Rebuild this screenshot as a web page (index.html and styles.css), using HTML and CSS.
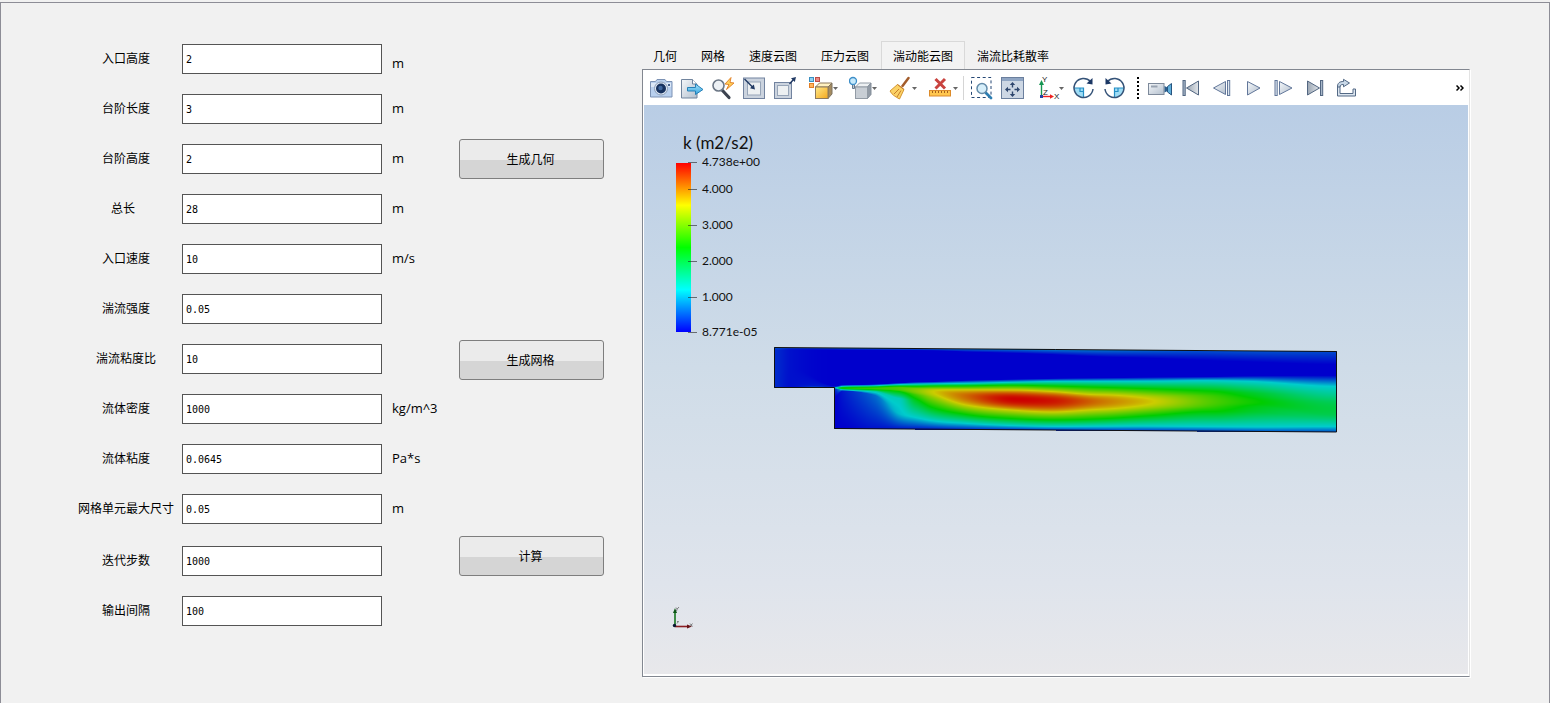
FILE: index.html
```html
<!DOCTYPE html>
<html lang="zh-CN">
<head>
<meta charset="utf-8">
<title>后台阶流动仿真</title>
<link rel="stylesheet" href="styles.css">
</head>
<body>
<main class="frame">
  <form class="params">
    <div class="row"><label for="p1">入口高度</label><input id="p1" type="text" value="2"><span class="unit unit-low">m</span></div>
    <div class="row"><label for="p2">台阶长度</label><input id="p2" type="text" value="3"><span class="unit">m</span></div>
    <div class="row"><label for="p3">台阶高度</label><input id="p3" type="text" value="2"><span class="unit">m</span></div>
    <div class="row"><label for="p4" class="short">总长</label><input id="p4" type="text" value="28"><span class="unit">m</span></div>
    <div class="row"><label for="p5">入口速度</label><input id="p5" type="text" value="10"><span class="unit">m/s</span></div>
    <div class="row"><label for="p6">湍流强度</label><input id="p6" type="text" value="0.05"></div>
    <div class="row"><label for="p7">湍流粘度比</label><input id="p7" type="text" value="10"></div>
    <div class="row"><label for="p8">流体密度</label><input id="p8" type="text" value="1000"><span class="unit">kg/m^3</span></div>
    <div class="row"><label for="p9">流体粘度</label><input id="p9" type="text" value="0.0645"><span class="unit">Pa*s</span></div>
    <div class="row"><label for="p10">网格单元最大尺寸</label><input id="p10" type="text" value="0.05"><span class="unit">m</span></div>
    <div class="row row-group"><label for="p11">迭代步数</label><input id="p11" type="text" value="1000"></div>
    <div class="row"><label for="p12">输出间隔</label><input id="p12" type="text" value="100"></div>
  </form>

  <div class="actions">
    <button type="button">生成几何</button>
    <button type="button">生成网格</button>
    <button type="button">计算</button>
  </div>

  <section class="viewer">
    <div class="tabs" role="tablist">
      <button class="tab" role="tab" type="button">几何</button>
      <button class="tab" role="tab" type="button">网格</button>
      <button class="tab" role="tab" type="button">速度云图</button>
      <button class="tab" role="tab" type="button">压力云图</button>
      <button class="tab active" role="tab" type="button" aria-selected="true">湍动能云图</button>
      <button class="tab" role="tab" type="button">湍流比耗散率</button>
    </div>
    <div class="panel">
      <div class="toolbar">
        <svg class="defs" width="0" height="0" aria-hidden="true">
          <defs>
            <linearGradient id="steel" x1="0" y1="0" x2="1" y2="1"><stop offset="0" stop-color="#f4f7fa"/><stop offset="1" stop-color="#b3bfcd"/></linearGradient>
            <linearGradient id="sky" x1="0" y1="0" x2="0" y2="1"><stop offset="0" stop-color="#a5e2fa"/><stop offset="1" stop-color="#35a5e0"/></linearGradient>
            <linearGradient id="gold" x1="0" y1="0" x2="1" y2="1"><stop offset="0" stop-color="#ffe98a"/><stop offset="1" stop-color="#f5a81c"/></linearGradient>
            <linearGradient id="dim" x1="0" y1="0" x2="1" y2="0"><stop offset="0" stop-color="#9ba6b3"/><stop offset="1" stop-color="#e2e6ea"/></linearGradient>
          </defs>
        </svg>
        <button class="tool" type="button" aria-label="截图"><svg width="24" height="24" viewBox="0 0 24 24"><path d="M1.500 5.500h5l1.500-2h8l1.500 2h5.500V21H1.500z" fill="#b9d0ee" stroke="#7c92b4"/><path d="M2 7h20v4H2z" fill="#dce8f7"/><circle cx="12" cy="12.500" r="6.500" fill="#dfe9f5" stroke="#8c9db6"/><circle cx="12" cy="12.500" r="5" fill="#17325f"/><circle cx="11.500" cy="12" r="2.200" fill="#4169a0"/><rect x="19" y="8" width="2" height="2" fill="#46618b"/></svg></button>
        <button class="tool" type="button" aria-label="导出场景"><svg width="24" height="24" viewBox="0 0 24 24"><path d="M1.500 3.500h11l4.500 4.500v14H1.500z" fill="url(#steel)" stroke="#71849d"/><path d="M12.500 3.500V8H17" fill="#fff" stroke="#71849d"/><path d="M7.500 11.500h8V8l7.500 5.500-7.500 5v-3.500h-8z" fill="url(#sky)" stroke="#2580b7"/></svg></button>
        <button class="tool" type="button" aria-label="快速缩放"><svg width="24" height="24" viewBox="0 0 24 24"><path d="M11 14l7 7.500" stroke="#3c4350" stroke-width="3.200" stroke-linecap="round"/><circle cx="7.500" cy="9.500" r="5.500" fill="#edf1f5" stroke="#6c7786" stroke-width="1.600"/><path d="M20 1.500l-6 6.500 4 .5-2.500 5L23 7l-4-.5z" fill="#ffd15a" stroke="#e4862e"/></svg></button>
        <button class="tool" type="button" aria-label="缩放到数据"><svg width="24" height="24" viewBox="0 0 24 24"><rect x="1.500" y="2" width="21" height="20.500" fill="#cbd3de" stroke="#72839f"/><rect x="5.500" y="6" width="13" height="13" fill="#edf0f2" stroke="#97a5b8"/><path d="M2.500 3l9 9" stroke="#203963" stroke-width="1.400"/><path d="M13 13.500l-5-1.200 3.800-3.800z" fill="#203963"/></svg></button>
        <button class="tool" type="button" aria-label="还原缩放"><svg width="24" height="24" viewBox="0 0 24 24"><rect x="1.500" y="6.500" width="17" height="16" fill="#cbd3de" stroke="#72839f"/><rect x="4.500" y="9.500" width="11" height="10" fill="#edf0f2" stroke="#97a5b8"/><path d="M16.500 8l4-4.500" stroke="#203963" stroke-width="1.400"/><path d="M23 1l-1.200 5-3.800-3.800z" fill="#203963"/></svg></button>
        <button class="tool menu first-menu" type="button" aria-label="颜色"><svg width="30" height="24" viewBox="0 0 30 24"><g stroke-width="1"><rect x=".5" y="1.500" width="4" height="4" fill="#8fd1f2" stroke="#3b8fc0"/><rect x="6.500" y="1.500" width="4" height="4" fill="#ea8a83" stroke="#bc4d47"/><rect x=".5" y="7.500" width="4" height="4" fill="#ffb55e" stroke="#e27f24"/></g><path d="M6.500 11l4-4h12.500l-4 4z" fill="#fff1c0" stroke="#8e7a5c"/><path d="M19 11l4-4v11l-4 4.500z" fill="#a58c60" stroke="#7d7260"/><rect x="6.500" y="11" width="12.500" height="11.500" fill="url(#gold)" stroke="#8e7a5c"/><path d="M24 11h5l-2.500 3z" fill="#666"/></svg></button>
        <button class="tool menu" type="button" aria-label="光照"><svg width="30" height="24" viewBox="0 0 30 24"><circle cx="4" cy="5" r="3.500" fill="#c7eafc" stroke="#3d8ec8" stroke-width="1.300"/><path d="M3.500 9v3.500h2V9" fill="#bfc7cf" stroke="#63788d"/><path d="M6.500 11l4-4H22l-3.500 4z" fill="#edf0f2" stroke="#929ba5"/><path d="M18.500 11L22 7v11.500l-3.500 4z" fill="#929ba6" stroke="#858f9b"/><rect x="6.500" y="11" width="12" height="11.500" fill="#c8ced5" stroke="#929ba5"/><path d="M23 11h5l-2.500 3z" fill="#666"/></svg></button>
        <button class="tool menu" type="button" aria-label="清除"><svg width="30" height="24" viewBox="0 0 30 24"><path d="M19.500 2l-6 8" stroke="#a35c2b" stroke-width="2.500" stroke-linecap="round"/><path d="M8.500 8.500l6.500 5-4.500 9.500C7 21 3 19 1 15z" fill="#fbd266" stroke="#d49632"/><path d="M8.500 8.500l6.500 5M10 13l-5 5M12 14.500L8 21" stroke="#c67b2b" fill="none"/><path d="M23 11h5l-2.500 3z" fill="#666"/></svg></button>
        <button class="tool menu" type="button" aria-label="清除标尺"><svg width="30" height="24" viewBox="0 0 30 24"><path d="M6.500 3l9.500 9.500M16 3l-9.500 9.500" stroke="#c9433f" stroke-width="3"/><rect x=".5" y="14.500" width="21" height="5.500" fill="#ffc64e" stroke="#dc8b2a"/><path d="M3.500 15v2M6.500 15v2M9.500 15v2M12.500 15v2M15.500 15v2M18.500 15v2" stroke="#a25f1e"/><path d="M24 11h5l-2.500 3z" fill="#666"/></svg></button>
        <span class="separator"></span>
        <button class="tool" type="button" aria-label="框选缩放"><svg width="24" height="24" viewBox="0 0 24 24"><rect x="2.500" y="1.500" width="19.500" height="20" fill="none" stroke="#254774" stroke-dasharray="3 2.600"/><path d="M17 17l5 5" stroke="#2d7eb2" stroke-width="2.800" stroke-linecap="round"/><circle cx="13" cy="12.500" r="5" fill="#d7effa" stroke="#638ba9" stroke-width="1.500"/></svg></button>
        <button class="tool" type="button" aria-label="适应窗口"><svg width="24" height="24" viewBox="0 0 24 24"><rect x="1.500" y="1.500" width="22" height="21" fill="#cdd7e4" stroke="#6b7f9d"/><path d="M2 2h21v3H2z" fill="#8fa5c3"/><path d="M12.500 6l2.700 3H13.200v2.500h-1.400V9H9.800zM12.500 21l-2.700-3h2v-2.500h1.400V18h2zM5 13.500l3-2.700v2h2.500v1.400H8v2zM20 13.500l-3 2.700v-2h-2.500v-1.400H17v-2z" fill="#2d456d"/></svg></button>
        <button class="tool menu axes" type="button" aria-label="视角"><svg width="30" height="24" viewBox="0 0 30 24"><path d="M7.500 20V7" stroke="#159552" stroke-width="1.400"/><path d="M7.500 4l2.500 5H5z" fill="#159552"/><path d="M7 20.500h10" stroke="#f02020" stroke-width="1.400"/><path d="M20 20.500l-4 2.300v-4.600z" fill="#f02020"/><rect x="6" y="19" width="3" height="3" fill="#2442a8"/><g class="axis-text"><text x="8" y="6">Y</text><text x="9" y="19">Z</text><text x="20" y="23">X</text></g><path d="M25 11h5l-2.500 3z" fill="#666"/></svg></button>
        <button class="tool" type="button" aria-label="顺时针旋转"><svg width="24" height="24" viewBox="0 0 24 24"><path d="M2 12a9.500 9.500 0 0 0 9.500 9.500V12z" fill="#9edcf5"/><path d="M2 12h9.500v9.500M8 12v3.500h3.500" fill="none" stroke="#258fc6" stroke-width="1.200"/><path d="M18.500 5.500A9.500 9.500 0 1 0 21 13" fill="none" stroke="#355378" stroke-width="1.500"/><path d="M20.500 2v6.500l-6-1z" fill="#1b3764"/></svg></button>
        <button class="tool" type="button" aria-label="逆时针旋转"><svg width="24" height="24" viewBox="0 0 24 24"><path d="M21 12a9.500 9.500 0 0 1-9.500 9.500V12z" fill="#9edcf5"/><path d="M21 12h-9.500v9.500M15 12v3.500h-3.500" fill="none" stroke="#258fc6" stroke-width="1.200"/><path d="M4.500 5.500A9.500 9.500 0 1 1 2 13" fill="none" stroke="#355378" stroke-width="1.500"/><path d="M2.500 2v6.500l6-1z" fill="#1b3764"/></svg></button>
        <span class="handle"></span>
        <button class="tool" type="button" aria-label="录制"><svg width="24" height="24" viewBox="0 0 24 24"><rect x=".5" y="7.500" width="15.500" height="11" fill="url(#steel)" stroke="#7d899a"/><path d="M3 10.500h6.500" stroke="#98a3b1" stroke-width="2"/><path d="M16.500 10l3 1.500v3.500l-3 1.500z" fill="#2a5d8c"/><path d="M23.500 7.500l-4 3v5.500l4 3z" fill="#5eaedb" stroke="#26547f"/></svg></button>
        <button class="tool" type="button" aria-label="首帧"><svg width="24" height="24" viewBox="0 0 24 24"><rect x="4" y="4.500" width="2.200" height="15" fill="#a9b8ca" stroke="#526681"/><path d="M19.500 5v14L7.500 12z" fill="url(#dim)" stroke="#526681"/></svg></button>
        <button class="tool" type="button" aria-label="上一帧"><svg width="24" height="24" viewBox="0 0 24 24"><path d="M15.500 5.500v13L3.500 12z" fill="url(#steel)" stroke="#62779a"/><rect x="17.500" y="4.500" width="2.200" height="15" fill="#dce5ef" stroke="#62779a"/></svg></button>
        <button class="tool" type="button" aria-label="播放"><svg width="24" height="24" viewBox="0 0 24 24"><path d="M6.500 5.500v13.500L19 12z" fill="url(#steel)" stroke="#62779a"/></svg></button>
        <button class="tool" type="button" aria-label="下一帧"><svg width="24" height="24" viewBox="0 0 24 24"><rect x="3" y="4.500" width="2.200" height="15" fill="#dce5ef" stroke="#62779a"/><path d="M7.500 5.500v13L20 12z" fill="url(#steel)" stroke="#62779a"/></svg></button>
        <button class="tool" type="button" aria-label="末帧"><svg width="24" height="24" viewBox="0 0 24 24"><path d="M4.500 5v14l12-7z" fill="url(#dim)" stroke="#526681"/><rect x="17.500" y="4.500" width="2.200" height="15" fill="#a9b8ca" stroke="#526681"/></svg></button>
        <button class="tool" type="button" aria-label="循环"><svg width="24" height="24" viewBox="0 0 24 24"><path d="M3.500 9v11h18v-7h-2.500v4.500H6V9z" fill="#dce5ef" stroke="#536985"/><path d="M3.500 11c0-4 2-5.500 6-5.500V3.300L15.500 7 9.500 10.800V8.500C7 8.500 6 9 6 11z" fill="#c9d8e7" stroke="#536985"/></svg></button>
        <button class="more" type="button" aria-label="更多"><svg width="8" height="7" viewBox="0 0 8 7"><path d="M.5.500L3 3 .5 5.500M4.500.500L7 3 4.500 5.500" fill="none" stroke="#000" stroke-width="1.500"/></svg></button>
      </div>
      <div class="scene">
        <svg class="legend" width="110" height="210" viewBox="0 0 110 210" role="img" aria-label="k 色标">
          <defs><linearGradient id="rainbow" x1="0" y1="0" x2="0" y2="1"><stop offset="0" stop-color="#f00"/><stop offset=".25" stop-color="#ff0"/><stop offset=".5" stop-color="#0f0"/><stop offset=".75" stop-color="#0ff"/><stop offset="1" stop-color="#00f"/></linearGradient></defs>
          <text class="legend-title" x="9" y="19">k (m2/s2)</text>
          <rect x="2" y="33" width="15" height="169" fill="url(#rainbow)"/>
          <path d="M14 32.500h9M14 59.500h9M14 95.500h9M14 131.500h9M14 167.500h9M14 202.500h9" stroke="#222" stroke-opacity=".6"/>
          <g class="legend-text"><text x="28" y="36">4.738e+00</text><text x="28" y="63">4.000</text><text x="28" y="99">3.000</text><text x="28" y="135">2.000</text><text x="28" y="171">1.000</text><text x="28" y="206">8.771e-05</text></g>
        </svg>
        <canvas class="field" id="field" width="565" height="88"></canvas>
        <svg class="triad" width="26" height="24" viewBox="0 0 26 24" aria-hidden="true"><path d="M5 20V5" stroke="#15751f" stroke-width="1.600"/><path d="M5 2l2 5H3z" fill="#0b5514"/><path d="M5 20.500h14" stroke="#8b1c22" stroke-width="1.600"/><path d="M22 20.500l-5 2v-4z" fill="#681319"/><circle cx="4.500" cy="19.500" r="1.700" fill="#0b1833"/><path d="M6 1.500l1.200 1.500L9 1M7.200 3L6.500 5M7 15.500h1.500L7 17.500M20 17.500l2.500 3M22.500 17.500l-2.500 3" fill="none" stroke="#555" stroke-width=".7"/></svg>
      </div>
    </div>
  </section>
</main>
<script src="field.js"></script>
</body>
</html>
```
FILE: styles.css
```css
* { box-sizing: border-box; }

body {
  margin: 0;
  background: #f1f1f1;
  color: #000;
  font-family: "Open Sans", "Noto Sans CJK SC", sans-serif;
  font-size: 12px;
  line-height: 16px;
}

button, input { font: inherit; color: inherit; }

.frame {
  display: flex;
  min-height: calc(100vh - 2px);
  margin-top: 2px;
  padding: 0 79px 26px 77px;
  border: 1px solid #8d8d96;
  border-bottom: 0;
}

/* parameters */
.params {
  display: flex;
  flex-direction: column;
  gap: 20px;
  width: 381px;
  padding-top: 41px;
}

.row {
  display: grid;
  grid-template-columns: 96px 200px 1fr;
  align-items: center;
  height: 30px;
  column-gap: 8px;
}

.row-group { margin-top: 2px; }

.row label {
  padding-bottom: 2px;
  text-align: center;
  white-space: nowrap;
  font-family: "Noto Sans CJK SC", sans-serif;
}

.row .short { padding-right: 6px; }

.row input {
  width: 100%;
  height: 30px;
  padding: 0 3px;
  border: 1px solid #545454;
  border-radius: 0;
  background: #fff;
  font-family: "DejaVu Sans Mono", monospace;
  font-size: 10px;
}

.unit { padding: 0 0 2px 2px; font-size: 13px; }
.unit-low { padding: 8px 0 0 2px; }

/* action buttons */
.actions {
  display: flex;
  flex-direction: column;
  gap: 161px;
  width: 145px;
  padding-top: 136px;
}

.actions button {
  height: 40px;
  flex-shrink: 0;
  padding: 2px 8px 0 6px;
  border: 1px solid #7e7e7e;
  border-radius: 3px;
  background: linear-gradient(#ebebeb 0 52%, #d5d5d5 52% 100%);
}

.actions button:last-child { margin-top: -5px; }

/* result viewer */
.viewer {
  display: flex;
  flex-direction: column;
  flex: 1;
  min-width: 0;
  margin-left: 38px;
  padding-top: 38px;
}

.tabs { display: flex; margin-left: -1px; }

.tab {
  height: 28px;
  padding: 2px 11px 0;
  border: 1px solid transparent;
  border-bottom: 0;
  background: none;
  white-space: nowrap;
}

.tab.active { border-color: #d9d9d9; background: #f3f3f3; }

.panel {
  display: flex;
  flex-direction: column;
  flex: 1;
  padding: 0 1px 2px;
  border: 1px solid #828790;
  border-right-color: #e3e3e3;
  background: #fff;
  box-shadow: 1px 1px #fff;
}

.toolbar {
  display: flex;
  align-items: center;
  height: 35px;
  padding-left: 1px;
}

.defs { position: absolute; }

.tool {
  display: flex;
  justify-content: center;
  align-items: center;
  flex: none;
  width: 31px;
  height: 30px;
  padding: 0;
  border: 0;
  background: none;
}

.menu { width: 40px; padding-left: 4px; }
.first-menu { margin-left: 2px; }
.axes { margin-right: 1px; }
.separator { width: 1px; height: 24px; margin: 0 1px; background: #d5d5d5; }
.handle { width: 2px; height: 22px; margin: 0 5px 0 7px; background: repeating-linear-gradient(#000 0 2px, transparent 2px 4px); }
.axis-text { font: 8px "Liberation Sans", sans-serif; fill: #222; }

.more {
  display: flex;
  margin-left: auto;
  padding: 6px 4px 4px;
  border: 0;
  background: none;
}

/* 3D scene: items float over the background */
.scene {
  position: relative;
  flex: 1;
  min-height: 340px;
  overflow: hidden;
  background: linear-gradient(#b9cde5, #cfdce8 46%, #dfe4ec 84%, #e8e8eb);
}

.legend { position: absolute; left: 30px; top: 25px; }
.legend text { font-family: Lato, sans-serif; fill: #111; }
.legend .legend-title { font-size: 17px; }
.legend-text { font-size: 12px; }
.field { position: absolute; left: 130px; top: 242px; }
.triad { position: absolute; left: 26px; bottom: 44px; }
```
FILE: field.js
```js
// Turbulent kinetic energy on a backward-facing step.
// Each profile: x, then [y, value] pairs from the top wall to the bottom wall.
const profiles = [
  [0,   [0,.10],[3,.05],[20,.05],[36,.05],[37,.05],[38,.05],[39,.05],[40,.05],[50,.05],[60,.05],[81,.05]],
  [16,  [0,.08],[2,.02],[20,.02],[36,.02],[37,.02],[38,.02],[39,.02],[40,.04],[50,.02],[60,.02],[81,.02]],
  [60,  [0,.10],[2,0],[38,0],[39,.05],[39.3,.1],[39.6,.2],[40,.25],[40.5,.15],[41,.05],[50,0],[81,0]],
  [68,  [0,.12],[2,0],[37,0],[38.4,.25],[39,.4],[39.6,.5],[40.3,.5],[41,.4],[41.8,.25],[43,.03],[81,0]],
  [100, [0,.12],[2,0],[36,0],[37.5,.25],[38.5,.45],[39.5,.55],[40.3,.57],[41.5,.5],[43,.3],[47,.13],[81,.02]],
  [124, [0,.13],[2,0],[34.5,0],[36.2,.25],[37.8,.5],[39,.59],[40.5,.6],[43,.5],[50,.27],[65,.23],[81,.02]],
  [141, [0,.13],[2,0],[33.5,0],[35.6,.25],[37.8,.5],[40,.64],[42,.66],[46,.58],[52,.46],[69,.25],[81,.02]],
  [157, [0,.14],[2,0],[33,0],[35.2,.25],[37.4,.5],[40.5,.70],[43,.74],[48,.68],[58.6,.5],[72,.25],[81,.02]],
  [191, [0,.14],[3,0],[31.5,0],[34.5,.25],[37,.5],[41,.75],[47,.87],[56,.75],[65.5,.5],[74.5,.25],[81,.03]],
  [240, [0,.14],[4,0],[30,0],[33,.25],[36,.5],[41,.76],[50,1],[61,.75],[69.5,.5],[76.5,.25],[81,.03]],
  [276, [0,.15],[5,0],[29,0],[32,.25],[36.5,.5],[42,.75],[51,.98],[62.500,.75],[70.5,.5],[77,.25],[81,.04]],
  [326, [0,.14],[7,0],[28,0],[31.5,.25],[37.5,.5],[45,.75],[51.5,.86],[59.5,.75],[69,.5],[76.5,.25],[81,.05]],
  [376, [0,.12],[8,0],[27,0],[31,.25],[38.6,.5],[45,.68],[51.3,.76],[58,.68],[65.5,.5],[76,.25],[81,.05]],
  [436, [0,.10],[10,0],[26,0],[30,.25],[40.5,.5],[45,.57],[51,.6],[56,.57],[61,.5],[76,.25],[81,.06]],
  [476, [0,.10],[11,0],[25,0],[30.5,.25],[42,.45],[46,.49],[51,.52],[55,.49],[61,.45],[76,.25],[81,.07]],
  [563, [0,.09],[13,0],[24,0],[35,.25],[44,.33],[50,.39],[58,.42],[64,.4],[68,.35],[75,.25],[81,.08]]
];
const canvas = document.getElementById("field");
const ctx = canvas.getContext("2d");
const W = 563, TILT = 4;
const stops = [[0,0,204],[0,204,204],[0,204,0],[204,204,0],[204,0,0]];

function color(v) {
  const p = Math.min(Math.max(v, 0), 1) * 4;
  const i = Math.min(Math.floor(p), 3);
  return stops[i].map((c, k) => c + (stops[i + 1][k] - c) * (p - i));
}

// Slope of component k of point i at profile n, limited so curves never overshoot.
function slope(n, i, k) {
  if (n === 0 || n === profiles.length - 1) return 0;
  const [p, q, r] = [profiles[n - 1], profiles[n], profiles[n + 1]];
  const h0 = q[0] - p[0], h1 = r[0] - q[0];
  const s0 = (q[i][k] - p[i][k]) / h0, s1 = (r[i][k] - q[i][k]) / h1;
  if (s0 * s1 <= 0) return 0;
  const mid = Math.abs((s0 * h1 + s1 * h0) / (h0 + h1));
  return Math.sign(s0) * Math.min(mid, 2 * Math.abs(s0), 2 * Math.abs(s1));
}

function columnAt(x) {
  let n = 1;
  while (n < profiles.length - 1 && profiles[n][0] < x) n++;
  const a = profiles[n - 1], b = profiles[n], h = b[0] - a[0];
  const t = (x - a[0]) / h, t2 = t * t, t3 = t2 * t;
  return a.slice(1).map((p, j) => p.map((q, k) =>
    (2 * t3 - 3 * t2 + 1) * q + (t3 - 2 * t2 + t) * h * slope(n - 1, j + 1, k) +
    (3 * t2 - 2 * t3) * b[j + 1][k] + (t3 - t2) * h * slope(n, j + 1, k)));
}

function valueAt(col, y) {
  for (let i = 1; i < col.length; i++) {
    if (y > col[i][0]) continue;
    const [y0, v0] = col[i - 1], [y1, v1] = col[i];
    const t = (y - y0) / (y1 - y0 || 1);
    if (i === 6) return v1 - (v1 - v0) * (1 - t) ** 2;
    if (i === 7) return v0 - (v0 - v1) * t ** 2;
    return v0 + (v1 - v0) * t;
  }
  return col[col.length - 1][1];
}

const img = ctx.createImageData(W, 88);
for (let x = 0; x < W; x++) {
  const col = columnAt(x);
  const shift = TILT * x / W;
  const depth = x < 60 ? 40 : 81;
  for (let py = 0; py < 88; py++) {
    const y = py - shift;
    if (y < 0 || y > depth) continue;
    img.data.set([...color(valueAt(col, y)), 255], (py * W + x) * 4);
  }
}
ctx.putImageData(img, 0, 0);
ctx.strokeStyle = "#111";
ctx.lineWidth = 1;
ctx.beginPath();
ctx.moveTo(.5, .5);
ctx.lineTo(W - .5, TILT + .5);
ctx.lineTo(W - .5, TILT + 81);
ctx.lineTo(60.5, 81.500);
ctx.lineTo(60.5, 40.500);
ctx.lineTo(.5, 40.500);
ctx.closePath();
ctx.stroke();
```
